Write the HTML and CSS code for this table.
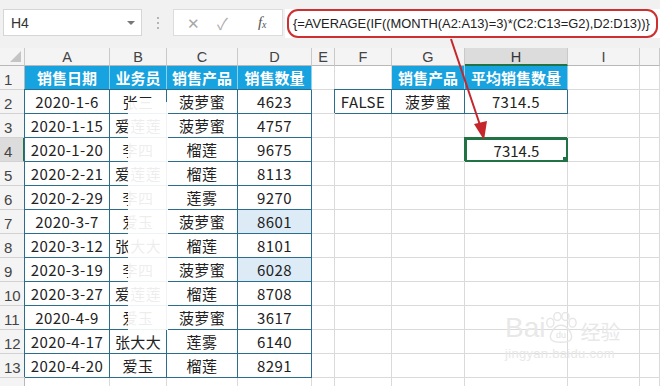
FILE: index.html
```html
<!DOCTYPE html>
<html lang="zh">
<head>
<meta charset="utf-8">
<link rel="stylesheet" href="styles.css">
</head>
<body>
<div class="page">
  <div class="topbar">
    <div class="namebox"><span>H4</span><span class="dd"></span></div>
    <div class="dots"><i></i><i></i><i></i></div>
    <div class="fnbox"><span class="x">✕</span><span class="ok">✓</span><span class="fx">f<sub>x</sub></span></div>
    <div class="formula"><div class="oval">{=AVERAGE(IF((MONTH(A2:A13)=3)*(C2:C13=G2),D2:D13))}</div></div>
  </div>
  <div class="sheet">
    <div class="c ch corner"></div><div class="c ch">A</div><div class="c ch">B</div><div class="c ch">C</div><div class="c ch">D</div><div class="c ch">E</div><div class="c ch">F</div><div class="c ch">G</div><div class="c ch sel">H</div><div class="c ch">I</div><div class="c ch"></div>

    <div class="c rh">1</div><div class="c hd">销售日期</div><div class="c hd">业务员</div><div class="c hd">销售产品</div><div class="c hd">销售数量</div><div class="c"></div><div class="c"></div><div class="c hd">销售产品</div><div class="c hd">平均销售数量</div><div class="c"></div><div class="c"></div>

    <div class="c rh">2</div><div class="c t">2020-1-6</div><div class="c t">张三</div><div class="c t">菠萝蜜</div><div class="c t">4623</div><div class="c"></div><div class="c t">FALSE</div><div class="c t">菠萝蜜</div><div class="c t">7314.5</div><div class="c"></div><div class="c"></div>

    <div class="c rh">3</div><div class="c t">2020-1-15</div><div class="c t">爱莲莲</div><div class="c t">菠萝蜜</div><div class="c t">4757</div><div class="c"></div><div class="c"></div><div class="c"></div><div class="c"></div><div class="c"></div><div class="c"></div>

    <div class="c rh sel">4</div><div class="c t">2020-1-20</div><div class="c t">李四</div><div class="c t">榴莲</div><div class="c t">9675</div><div class="c"></div><div class="c"></div><div class="c"></div><div class="c active">7314.5</div><div class="c"></div><div class="c"></div>

    <div class="c rh">5</div><div class="c t">2020-2-21</div><div class="c t">爱莲莲</div><div class="c t">榴莲</div><div class="c t">8113</div><div class="c"></div><div class="c"></div><div class="c"></div><div class="c"></div><div class="c"></div><div class="c"></div>

    <div class="c rh">6</div><div class="c t">2020-2-29</div><div class="c t">李四</div><div class="c t">莲雾</div><div class="c t">9270</div><div class="c"></div><div class="c"></div><div class="c"></div><div class="c"></div><div class="c"></div><div class="c"></div>

    <div class="c rh">7</div><div class="c t">2020-3-7</div><div class="c t">爱玉</div><div class="c t">菠萝蜜</div><div class="c t hl">8601</div><div class="c"></div><div class="c"></div><div class="c"></div><div class="c"></div><div class="c"></div><div class="c"></div>

    <div class="c rh">8</div><div class="c t">2020-3-12</div><div class="c t">张大大</div><div class="c t">榴莲</div><div class="c t">8101</div><div class="c"></div><div class="c"></div><div class="c"></div><div class="c"></div><div class="c"></div><div class="c"></div>

    <div class="c rh">9</div><div class="c t">2020-3-19</div><div class="c t">李四</div><div class="c t">菠萝蜜</div><div class="c t hl">6028</div><div class="c"></div><div class="c"></div><div class="c"></div><div class="c"></div><div class="c"></div><div class="c"></div>

    <div class="c rh">10</div><div class="c t">2020-3-27</div><div class="c t">爱莲莲</div><div class="c t">榴莲</div><div class="c t">8708</div><div class="c"></div><div class="c"></div><div class="c"></div><div class="c"></div><div class="c"></div><div class="c"></div>

    <div class="c rh">11</div><div class="c t">2020-4-9</div><div class="c t">爱玉</div><div class="c t">菠萝蜜</div><div class="c t">3617</div><div class="c"></div><div class="c"></div><div class="c"></div><div class="c"></div><div class="c"></div><div class="c"></div>

    <div class="c rh">12</div><div class="c t">2020-4-17</div><div class="c t">张大大</div><div class="c t">莲雾</div><div class="c t">6140</div><div class="c"></div><div class="c"></div><div class="c"></div><div class="c"></div><div class="c"></div><div class="c"></div>

    <div class="c rh">13</div><div class="c t">2020-4-20</div><div class="c t">爱玉</div><div class="c t">榴莲</div><div class="c t">8291</div><div class="c"></div><div class="c"></div><div class="c"></div><div class="c"></div><div class="c"></div><div class="c"></div>

    <div class="c rh"></div><div class="c"></div><div class="c"></div><div class="c"></div><div class="c"></div><div class="c"></div><div class="c"></div><div class="c"></div><div class="c"></div><div class="c"></div><div class="c"></div>

    <div class="smudge"></div>
  </div>

  <div class="watermark">
    <div class="wm-top"><span>Bai</span><svg class="paw" viewBox="0 0 40 36" width="36" height="32"><g fill="none" stroke="#e6e6e6" stroke-width="1.6"><ellipse cx="8" cy="12" rx="4" ry="5"/><ellipse cx="16" cy="5" rx="4" ry="4.5"/><ellipse cx="25" cy="5" rx="4" ry="4.5"/><ellipse cx="33" cy="12" rx="4" ry="5"/><path d="M20 15 C12 15 6 26 9 31 C12 35 28 35 31 31 C34 26 28 15 20 15 Z"/></g><text x="20" y="29" text-anchor="middle" font-size="10" fill="#e2e2e2" font-family="Liberation Sans, sans-serif">du</text></svg><span class="cn">经验</span></div>
    <div class="wm-url">jingyan.baidu.com</div>
  </div>

  <svg class="arrow" width="660" height="386" viewBox="0 0 660 386">
    <line x1="451" y1="39" x2="481" y2="128" stroke="#c4262b" stroke-width="2"/>
    <polygon points="484,140 474,124 487,121" fill="#c4262b"/>
  </svg>
</div>
</body>
</html>
```

FILE: styles.css
```css
* { box-sizing: border-box; }
html, body { margin: 0; padding: 0; background: #fff; }
body { width: 660px; height: 386px; overflow: hidden; font-family: "Noto Sans CJK SC", "Noto Sans", sans-serif; }
.page { position: relative; width: 660px; height: 386px; overflow: hidden; }

.topbar { height: 48px; background: #f1f1f1; display: flex; align-items: flex-start; padding: 9px 0 0 3px; }
.namebox { width: 139px; height: 27px; background: #fff; border: 1px solid #d6d6d6; display: flex; align-items: center; justify-content: space-between; padding: 0 6px 0 7px; font-family: "Liberation Sans", sans-serif; font-size: 14px; color: #333; }
.dd { width: 0; height: 0; border-left: 4px solid transparent; border-right: 4px solid transparent; border-top: 4px solid #777; }
.dots { width: 31px; height: 27px; display: flex; flex-direction: column; align-items: center; justify-content: center; gap: 3px; }
.dots i { display: block; width: 2px; height: 2px; background: #b5b5b5; }
.fnbox { width: 110px; height: 27px; background: #fff; border: 1px solid #dcdcdc; display: flex; align-items: center; font-size: 15px; color: #a8a8a8; }
.fnbox .x { margin-left: 13px; font-size: 15px; }
.fnbox .ok { margin-left: 17px; font-size: 16px; color: #b0b0b0; }
.fnbox .fx { margin-left: 30px; font-family: "Liberation Serif", serif; font-style: italic; color: #555; font-size: 15px; }
.fnbox .fx sub { font-size: 10px; vertical-align: -1px; }
.formula { flex: 1; height: 29px; background: #fff; margin-left: 2px; padding: 0 2px 0 2px; }
.oval { height: 29px; border: 2px solid #cc3030; border-radius: 11px; display: flex; align-items: center; padding-left: 4px; font-family: "Liberation Sans", sans-serif; font-size: 12.9px; color: #222; white-space: nowrap; }

.sheet { position: relative; display: grid; grid-template-columns: 25px 85px 57px 71px 74px 23px 57px 73px 103px 72px 20px; grid-template-rows: 18px repeat(14, 24px); }
.c { border-right: 1px solid #dadada; border-bottom: 1px solid #dadada; display: flex; align-items: center; justify-content: center; font-size: 15px; color: #222; white-space: nowrap; overflow: hidden; }
.ch { background: #f4f4f4; border-right-color: #c9c9c9; border-bottom-color: #b8b8b8; font-family: "Liberation Sans", sans-serif; color: #444; font-size: 14.5px; padding-top: 1px; }
.ch.sel { background: #dcdcdc; border-bottom: 2px solid #217346; color: #333; }
.corner { position: relative; }
.corner::after { content: ""; position: absolute; right: 3px; bottom: 3px; border-left: 11px solid transparent; border-bottom: 11px solid #c4c4c4; }
.rh { background: #f4f4f4; border-right-color: #b8b8b8; border-bottom-color: #d2d2d2; font-family: "Liberation Sans", sans-serif; color: #444; font-size: 15px; justify-content: flex-start; padding-left: 4px; padding-top: 4px; }
.rh.sel { background: #dcdcdc; border-right: 2px solid #217346; }
.hd { background: #17a2e0; color: #fff; font-weight: 700; border-right-color: #8fd0ee; border-bottom-color: #2b6d8c; font-size: 15px; }
.t { border-right-color: #2b6d8c; border-bottom-color: #2b6d8c; box-shadow: -1px -1px 0 #2b6d8c; letter-spacing: 0.4px; }
.hl { background: #ddebf7; }
.active { position: relative; border: 2px solid #217346; box-shadow: -1px -1px 0 #217346; }
.active::after { content: ""; position: absolute; right: -4px; bottom: -4px; width: 6px; height: 6px; background: #217346; border: 1px solid #fff; }

.smudge { position: absolute; left: 128px; top: 54px; width: 40px; height: 228px; background: rgba(255,255,255,0.92); }

.watermark { position: absolute; left: 505px; top: 312px; color: #e8e8e8; }
.wm-top { display: flex; align-items: flex-end; font-family: "Liberation Sans", sans-serif; font-size: 28px; line-height: 1; }
.wm-top .paw { margin: 0 1px -2px -2px; }
.wm-top .cn { font-family: "Noto Sans CJK SC", sans-serif; font-size: 20px; }
.wm-url { font-family: "Liberation Sans", sans-serif; font-size: 13px; margin-top: 4px; letter-spacing: 0.3px; }

.arrow { position: absolute; left: 0; top: 0; pointer-events: none; }
```
